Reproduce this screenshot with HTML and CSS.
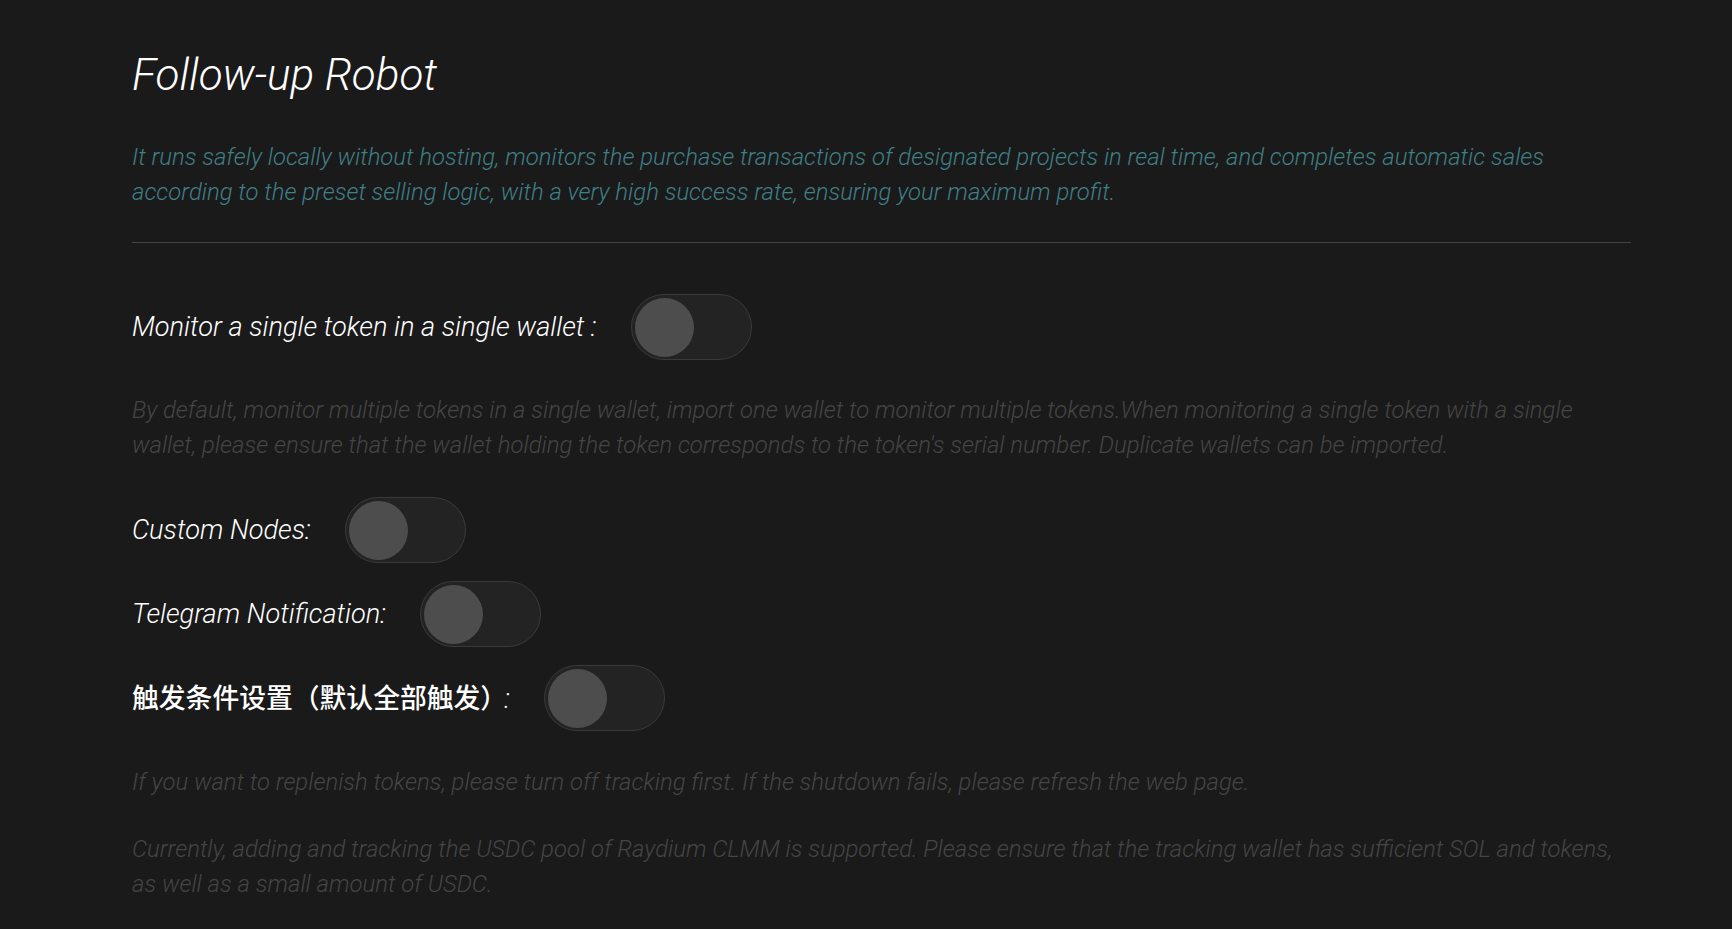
FILE: index.html
```html
<!DOCTYPE html>
<html lang="en">
<head>
<meta charset="utf-8">
<title>Follow-up Robot</title>
<link rel="stylesheet" href="styles.css">
</head>
<body>
<main class="page">
  <h1 class="title">Follow-up Robot</h1>
  <p class="intro">It runs safely locally without hosting, monitors the purchase transactions of designated projects in real time, and completes automatic sales according to the preset selling logic, with a very high success rate, ensuring your maximum profit.</p>
  <hr class="divider">
  <div class="row row-first">
    <span class="label">Monitor a single token in a single wallet :</span>
    <span class="switch"><span class="knob"></span></span>
  </div>
  <p class="note note-mid">By default, monitor multiple tokens in a single wallet, import one wallet to monitor multiple tokens.When monitoring a single token with a single wallet, please ensure that the wallet holding the token corresponds to the token's serial number. Duplicate wallets can be imported.</p>
  <div class="rows">
    <div class="row">
      <span class="label">Custom Nodes:</span>
      <span class="switch"><span class="knob"></span></span>
    </div>
    <div class="row">
      <span class="label">Telegram Notification:</span>
      <span class="switch"><span class="knob"></span></span>
    </div>
    <div class="row">
      <span class="label label-cjk">触发条件设置（默认全部触发）<span class="colon">:</span></span>
      <span class="switch"><span class="knob"></span></span>
    </div>
  </div>
  <p class="note note-a">If you want to replenish tokens, please turn off tracking first. If the shutdown fails, please refresh the web page.</p>
  <p class="note note-b">Currently, adding and tracking the USDC pool of Raydium CLMM is supported. Please ensure that the tracking wallet has sufficient SOL and tokens, as well as a small amount of USDC.</p>
</main>
</body>
</html>
```
FILE: styles.css
```css
html, body {
  margin: 0;
  padding: 0;
  background: #1a1a1a;
}
body {
  font-family: Roboto, "Noto Sans CJK SC", sans-serif;
  color: #ffffff;
}
.page {
  width: 1499px;
  padding: 48px 0 0 132px;
}
.title {
  margin: 0;
  font-size: 44px;
  line-height: 54px;
  font-weight: 300;
  font-style: italic;
  color: #ffffff;
}
.intro {
  margin: 38px 0 0;
  font-size: 23.9px;
  line-height: 35px;
  font-weight: 300;
  font-style: italic;
  color: #3f7f86;
}
.divider {
  margin: 32px 0 0;
  border: 0;
  border-top: 1px solid #444444;
  height: 0;
}
.row {
  display: flex;
  align-items: center;
  gap: 34px;
}
.row-first {
  margin-top: 51px;
}
.label {
  font-size: 27.2px;
  font-weight: 300;
  font-style: italic;
  color: #ffffff;
}
.label-cjk {
  font-family: "Noto Sans CJK SC", sans-serif;
  font-style: normal;
  font-weight: 500;
  font-size: 26.8px;
  line-height: 1;
}
.colon {
  font-family: Roboto, sans-serif;
  font-style: italic;
  font-weight: 300;
  margin-left: -3px;
}
.switch {
  box-sizing: border-box;
  width: 121px;
  height: 66px;
  border: 1px solid #3a3a3a;
  border-radius: 33px;
  background: #232323;
  display: flex;
  align-items: center;
  padding-left: 3px;
}
.knob {
  width: 59px;
  height: 59px;
  border-radius: 50%;
  background: #4d4d4d;
}
.note {
  margin: 0;
  font-size: 23.9px;
  line-height: 35px;
  font-weight: 300;
  font-style: italic;
  color: #454545;
}
.note-mid {
  margin-top: 33px;
}
.rows {
  margin-top: 34px;
  display: flex;
  flex-direction: column;
  gap: 18px;
}
.note-a {
  margin-top: 34px;
}
.note-b {
  margin-top: 32px;
}
```
